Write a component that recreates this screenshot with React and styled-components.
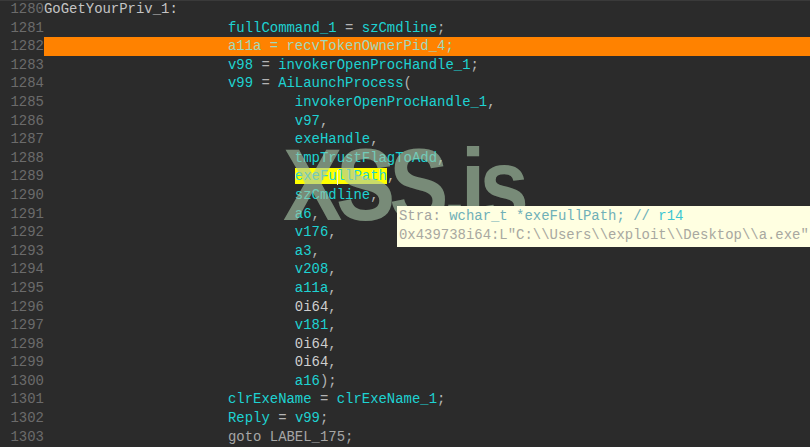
import React from "react";
import styled, { createGlobalStyle } from "styled-components";

const GlobalStyle = createGlobalStyle`
  html, body {
    margin: 0;
    padding: 0;
    background: #2b2b2b;
  }
`;

const Editor = styled.div`
  position: relative;
  width: 810px;
  height: 447px;
  overflow: hidden;
  background: #2b2b2b;
  border-top: 1px solid #3a3a3a;
  box-sizing: border-box;
  font-family: "Liberation Mono", "DejaVu Sans Mono", monospace;
  font-size: 13.95px;
  line-height: 18.6px;
`;

const Lines = styled.div`
  display: flex;
  flex-direction: column;
  margin-top: -1px;
`;

const Row = styled.div`
  display: flex;
  height: 18.6px;
  white-space: pre;
`;

const LineNo = styled.span`
  flex: none;
  width: 4ch;
  padding-left: 10.5px;
  color: #6b6b6b;
`;

const Code = styled.span`
  flex: 1;
  padding-left: ${(p) => p.indent || 0}ch;
  background: ${(p) => (p.current ? "#ff8200" : "transparent")};
  color: ${(p) => (p.current ? "#9fd9bd" : "inherit")};
`;

const colors = {
  id: "#1ed2d2",
  op: "#b4b4b4",
  num: "#cfcfcf",
  label: "#c4c4c4",
  kw: "#a6a6a6",
};

const Tok = styled.span`
  color: ${(p) => (p.plain ? "inherit" : colors[p.kind])};
  background: ${(p) => (p.mark ? "#ffff00" : "transparent")};
  position: relative;
`;

const Caret = styled.span`
  position: absolute;
  top: 2px;
  width: 1px;
  height: 15px;
  background: #f4f4d0;
`;

const Watermark = styled.div`
  position: absolute;
  left: 283px;
  top: 134px;
  font-family: "Liberation Sans", Arial, sans-serif;
  font-weight: bold;
  font-size: 102px;
  line-height: 100px;
  letter-spacing: -7px;
  transform: scaleX(0.87);
  transform-origin: left top;
  color: rgba(168, 198, 168, 0.62);
  pointer-events: none;
`;

const Hint = styled.div`
  position: absolute;
  left: 397px;
  top: 205px;
  right: 0;
  height: 41px;
  padding: 1px 0 0 2px;
  box-sizing: border-box;
  background: #ffffe1;
  white-space: pre;
  line-height: 19px;
  color: #a8a8a0;
`;

const HintPart = styled.span`
  color: ${(p) => p.color};
`;

const I = (t) => ["id", t];
const O = (t) => ["op", t];
const N = (t) => ["num", t];

const lines = [
  { n: 1280, indent: 0, toks: [["label", "GoGetYourPriv_1:"]] },
  { n: 1281, indent: 22, toks: [I("fullCommand_1"), O(" = "), I("szCmdline"), O(";")] },
  { n: 1282, indent: 22, current: true, toks: [["plain", "a11a = recvTokenOwnerPid_4;"]] },
  { n: 1283, indent: 22, toks: [I("v98"), O(" = "), I("invokerOpenProcHandle_1"), O(";")] },
  { n: 1284, indent: 22, toks: [I("v99"), O(" = "), I("AiLaunchProcess"), O("(")] },
  { n: 1285, indent: 30, toks: [I("invokerOpenProcHandle_1"), O(",")] },
  { n: 1286, indent: 30, toks: [I("v97"), O(",")] },
  { n: 1287, indent: 30, toks: [I("exeHandle"), O(",")] },
  { n: 1288, indent: 30, toks: [I("tmpTrustFlagToAdd"), O(",")] },
  { n: 1289, indent: 30, toks: [["mark", "exeFullPath"], O(",")] },
  { n: 1290, indent: 30, toks: [I("szCmdline"), O(",")] },
  { n: 1291, indent: 30, toks: [I("a6"), O(",")] },
  { n: 1292, indent: 30, toks: [I("v176"), O(",")] },
  { n: 1293, indent: 30, toks: [I("a3"), O(",")] },
  { n: 1294, indent: 30, toks: [I("v208"), O(",")] },
  { n: 1295, indent: 30, toks: [I("a11a"), O(",")] },
  { n: 1296, indent: 30, toks: [N("0i64"), O(",")] },
  { n: 1297, indent: 30, toks: [I("v181"), O(",")] },
  { n: 1298, indent: 30, toks: [N("0i64"), O(",")] },
  { n: 1299, indent: 30, toks: [N("0i64"), O(",")] },
  { n: 1300, indent: 30, toks: [I("a16"), O(");")] },
  { n: 1301, indent: 22, toks: [I("clrExeName"), O(" = "), I("clrExeName_1"), O(";")] },
  { n: 1302, indent: 22, toks: [I("Reply"), O(" = "), I("v99"), O(";")] },
  { n: 1303, indent: 22, toks: [["kw", "goto LABEL_175;"]] },
];

function Token({ kind, text }) {
  if (kind === "plain") return <Tok plain>{text}</Tok>;
  if (kind === "mark") {
    return (
      <Tok kind="id" mark>
        {text}
        <Caret style={{ left: "5ch" }} />
      </Tok>
    );
  }
  return <Tok kind={kind}>{text}</Tok>;
}

export default function App() {
  return (
    <>
      <GlobalStyle />
      <Editor>
        <Lines>
          {lines.map((line) => (
            <Row key={line.n}>
              <LineNo>{line.n}</LineNo>
              <Code indent={line.indent} current={line.current}>
                {line.toks.map(([kind, text], i) => (
                  <Token key={i} kind={kind} text={text} />
                ))}
              </Code>
            </Row>
          ))}
        </Lines>
        <Watermark>XSS.is</Watermark>
        <Hint>
          <div>
            <HintPart color="#a4a4a0">Stra: </HintPart>
            <HintPart color="#6fb0b8">wchar_t *exeFullPath; // </HintPart>
            <HintPart color="#3cc6d2">r14</HintPart>
          </div>
          <div>0x439738i64:L"C:\\Users\\exploit\\Desktop\\a.exe"</div>
        </Hint>
      </Editor>
    </>
  );
}
